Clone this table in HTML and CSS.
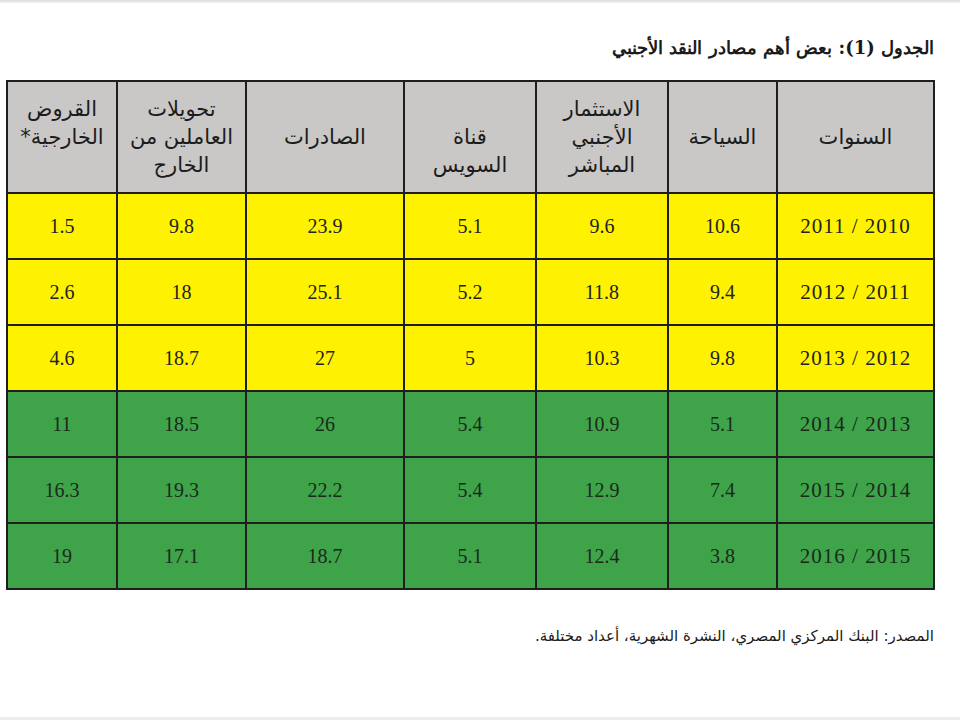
FILE: index.html
```html
<!DOCTYPE html>
<html lang="ar" dir="rtl">
<head>
<meta charset="utf-8">
<title>الجدول (1)</title>
<link rel="stylesheet" href="styles.css">
</head>
<body>
<div class="topband"></div>
<main class="page">
  <h1 class="title">الجدول (1): بعض أهم مصادر النقد الأجنبي</h1>
  <table class="data">
    <colgroup>
      <col class="c1"><col class="c2"><col class="c3"><col class="c4"><col class="c5"><col class="c6"><col class="c7">
    </colgroup>
    <thead>
      <tr>
        <th><div class="hd">السنوات</div></th>
        <th><div class="hd">السياحة</div></th>
        <th><div class="hd">الاستثمار<br>الأجنبي<br>المباشر</div></th>
        <th><div class="hd down">قناة<br>السويس</div></th>
        <th><div class="hd">الصادرات</div></th>
        <th><div class="hd">تحويلات<br>العاملين من<br>الخارج</div></th>
        <th><div class="hd up">القروض<br>الخارجية*</div></th>
      </tr>
    </thead>
    <tbody>
      <tr class="y"><td><span class="yr">2010 / 2011</span></td><td>10.6</td><td>9.6</td><td>5.1</td><td>23.9</td><td>9.8</td><td>1.5</td></tr>
      <tr class="y"><td><span class="yr">2011 / 2012</span></td><td>9.4</td><td>11.8</td><td>5.2</td><td>25.1</td><td>18</td><td>2.6</td></tr>
      <tr class="y"><td><span class="yr">2012 / 2013</span></td><td>9.8</td><td>10.3</td><td>5</td><td>27</td><td>18.7</td><td>4.6</td></tr>
      <tr class="g"><td><span class="yr">2013 / 2014</span></td><td>5.1</td><td>10.9</td><td>5.4</td><td>26</td><td>18.5</td><td>11</td></tr>
      <tr class="g"><td><span class="yr">2014 / 2015</span></td><td>7.4</td><td>12.9</td><td>5.4</td><td>22.2</td><td>19.3</td><td>16.3</td></tr>
      <tr class="g"><td><span class="yr">2015 / 2016</span></td><td>3.8</td><td>12.4</td><td>5.1</td><td>18.7</td><td>17.1</td><td>19</td></tr>
    </tbody>
  </table>
  <p class="source">المصدر: البنك المركزي المصري، النشرة الشهرية، أعداد مختلفة.</p>
</main>
<div class="bottomband"></div>
</body>
</html>
```
FILE: styles.css
```css
html, body {
  margin: 0;
  padding: 0;
  background: #ffffff;
}
body {
  width: 960px;
  height: 720px;
  overflow: hidden;
  display: flex;
  flex-direction: column;
  color: #1b1b1b;
}
.topband {
  height: 3px;
  background: linear-gradient(#dcdcdc, #f2f2f2);
  flex: none;
}
.page {
  flex: 1;
  padding: 0 26px 0 7px;
}
.title {
  margin: 33px 0 0 0;
  height: 44px;
  font-family: "DejaVu Serif", "Liberation Serif", serif;
  font-weight: bold;
  font-size: 18px;
  line-height: 24px;
  text-align: right;
}
.data {
  border-collapse: collapse;
  width: 927px;
  table-layout: fixed;
  margin-right: -1px;
}
.c1 { width: 157px; }
.c2 { width: 109px; }
.c3 { width: 132px; }
.c4 { width: 132px; }
.c5 { width: 158px; }
.c6 { width: 129px; }
.c7 { width: 110px; }
.data th, .data td {
  border: 2px solid #1e1e1e;
  text-align: center;
  padding: 0;
}
.data th {
  background: #c9c8c7;
  height: 110px;
  font-family: "DejaVu Sans", sans-serif;
  font-weight: normal;
  font-size: 21px;
  line-height: 28px;
  color: #1c1c1c;
  vertical-align: middle;
}
.hd.down { padding-top: 28px; }
.hd.up { padding-bottom: 28px; }
.data td {
  height: 64px;
  font-family: "Liberation Serif", "DejaVu Serif", serif;
  font-size: 20px;
  color: #222222;
}
.yr {
  font-size: 21px;
  letter-spacing: 1px;
}
.y td { background: #fff200; }
.g td { background: #3fa34a; color: #1a2a1a; }
.source {
  margin: 34px 0 0 0;
  font-family: "DejaVu Sans", sans-serif;
  font-size: 15px;
  line-height: 24px;
  text-align: right;
}
.bottomband {
  height: 3px;
  background: #ececec;
  flex: none;
}
```
